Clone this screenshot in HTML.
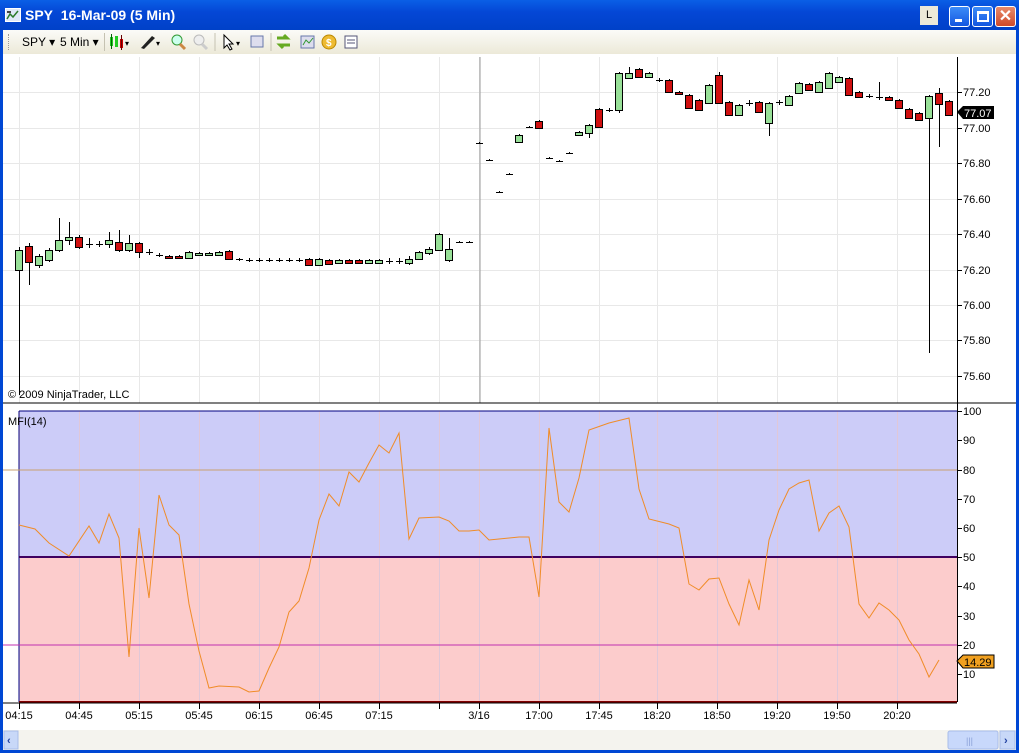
<!DOCTYPE html>
<html><head><meta charset="utf-8"><style>
*{margin:0;padding:0;box-sizing:border-box}
body{width:1019px;height:753px;overflow:hidden;background:#fff;font-family:"Liberation Sans",sans-serif;position:relative}
#title{position:absolute;left:0;top:0;width:1019px;height:30px;background:linear-gradient(#0a5fe6,#0447d6 40%,#0041c8);color:#fff;font-weight:bold;font-size:14px}
#tb{position:absolute;left:0;top:30px;width:1019px;height:24px;background:linear-gradient(#fbfbf8,#ece9d8);border-left:3px solid #0047d4;border-right:3px solid #0047d4;font-size:12px}
#frame{position:absolute;left:0;top:54px;width:1019px;height:699px;border-left:3px solid #0047d4;border-right:3px solid #0047d4;border-bottom:3px solid #0047d4}
.btn{position:absolute;top:6px;width:21px;height:21px;border:1px solid #fff;border-radius:3px;background:linear-gradient(#3c8cf8,#1356e0)}
</style></head><body>
<div id="title">
 <svg style="position:absolute;left:5px;top:8px" width="16" height="14"><rect x="0.5" y="0.5" width="15" height="13" fill="#dfe8f8" stroke="#fff"/><polyline points="2,11 5,6 8,9 13,3" fill="none" stroke="#2a7a2a" stroke-width="1.5"/><rect x="2" y="3" width="4" height="2" fill="#444"/></svg>
 <span style="position:absolute;left:25px;top:7px">SPY&nbsp; 16-Mar-09 (5 Min)</span>
 <div style="position:absolute;left:920px;top:6px;width:18px;height:19px;background:#ece9d8;color:#000;font-weight:normal;font-size:11px;text-align:center;line-height:19px">L</div>
 <div class="btn" style="left:949px"><div style="position:absolute;left:5px;top:12px;width:7px;height:3px;background:#fff"></div></div>
 <div class="btn" style="left:972px"><div style="position:absolute;left:4px;top:4px;width:12px;height:11px;border:2px solid #fff;border-top-width:3px"></div></div>
 <div class="btn" style="left:995px;background:linear-gradient(#e88a6a,#cf4a2a);color:#fff;text-align:center;line-height:19px;font-size:16px">✕</div>
</div>
<div id="tb">
 <div style="position:absolute;left:5px;top:4px;width:2px;height:16px;border-left:1px dotted #999"></div>
 <span style="position:absolute;left:19px;top:5px">SPY ▾</span>
 <span style="position:absolute;left:57px;top:5px">5 Min ▾</span>
 <div style="position:absolute;left:101px;top:3px;width:1px;height:18px;background:#c5c2b2"></div>
 <svg style="position:absolute;left:105px;top:3px" width="250" height="18">
  <rect x="2" y="4" width="3" height="9" fill="#2c2"/><line x1="3.5" y1="1" x2="3.5" y2="16" stroke="#060"/>
  <rect x="7" y="3" width="3" height="11" fill="#2c2"/><rect x="12" y="6" width="3" height="9" fill="#c00"/><line x1="13.5" y1="2" x2="13.5" y2="17" stroke="#600"/>
  <text x="17" y="13" font-size="8">▾</text>
  <path d="M33 15 L44 3 L47 5 L36 16 Z" fill="#222"/><text x="48" y="13" font-size="8">▾</text>
  <circle cx="69" cy="7" r="5" fill="#cfe" stroke="#393"/><line x1="72" y1="11" x2="77" y2="16" stroke="#c84" stroke-width="3"/>
  <circle cx="91" cy="7" r="5" fill="#eee" stroke="#bbb"/><line x1="94" y1="11" x2="99" y2="16" stroke="#ccc" stroke-width="3"/>
  <line x1="107" y1="0" x2="107" y2="18" stroke="#c5c2b2"/>
  <path d="M116 2 L116 15 L119 12 L122 17 L124 16 L121 11 L125 11 Z" fill="#fff" stroke="#000"/><text x="128" y="13" font-size="8">▾</text>
  <rect x="143" y="3" width="12" height="11" fill="#dde" stroke="#67a"/>
  <line x1="163" y1="0" x2="163" y2="18" stroke="#c5c2b2"/>
  <path d="M169 5 h10 l-3 -3 M182 12 h-10 l3 3" stroke="#6a2" stroke-width="3" fill="none"/>
  <rect x="193" y="3" width="13" height="12" fill="#dde" stroke="#67a"/><polyline points="195,12 198,7 201,10 205,5" stroke="#393" fill="none"/>
  <circle cx="221" cy="9" r="7" fill="#eb3" stroke="#b80"/><text x="218" y="13" font-size="10" fill="#fff" font-weight="bold">$</text>
  <rect x="237" y="3" width="12" height="12" fill="#fff" stroke="#557"/><line x1="239" y1="7" x2="247" y2="7" stroke="#557"/><line x1="239" y1="10" x2="247" y2="10" stroke="#557"/>
 </svg>
</div>
<div id="frame"></div>
<svg id="c" style="position:absolute;left:0;top:54px" width="1019" height="699" viewBox="0 54 1019 699" font-family="Liberation Sans" font-size="11">
 <g id="grid" stroke="#e8e8e8"></g>
 <line x1="480" y1="57" x2="480" y2="403" stroke="#999"/>
 <rect x="19" y="411" width="938" height="146" fill="#ccccf8"/>
 <rect x="19" y="557" width="938" height="145" fill="#fccccc"/>
 <g id="grid2" stroke="#e0c8d8"></g>
 <line x1="19" y1="411" x2="19" y2="702" stroke="#000080"/>
 <line x1="19" y1="411" x2="957" y2="411" stroke="#000080"/>
 <line x1="3" y1="470" x2="957" y2="470" stroke="#c8a070"/>
 <line x1="3" y1="645" x2="957" y2="645" stroke="#c030b0"/>
 <line x1="19" y1="557" x2="957" y2="557" stroke="#400060" stroke-width="2"/>
 <line x1="19" y1="702" x2="957" y2="702" stroke="#800000" stroke-width="2"/>
 <line x1="3" y1="403" x2="1016" y2="403" stroke="#000"/>
 <line x1="957.5" y1="57" x2="957.5" y2="702" stroke="#000"/>
 <line x1="3" y1="703" x2="957" y2="703" stroke="#000"/>
 <g id="cand"></g>
 <polyline id="mfi" fill="none" stroke="#f08c28" stroke-width="1"/>
 <g id="ax" fill="#000"></g>
 <text x="8" y="398">© 2009 NinjaTrader, LLC</text>
 <text x="8" y="425">MFI(14)</text>
 <path d="M957 112 l6 -6 h31 v13 h-31 z" fill="#000"/><text x="964" y="117" fill="#fff">77.07</text>
 <path d="M957 661 l6 -6 h31 v13 h-31 z" fill="#f0a020" stroke="#000"/><text x="964" y="666" fill="#000">14.29</text>
 <rect x="3" y="730" width="1013" height="20" fill="#f4f3ee"/>
 <rect x="4" y="731" width="14" height="18" fill="#c8d8f8" stroke="#a8bce8"/><text x="7" y="744" fill="#2040a0" font-weight="bold">‹</text>
 <rect x="948" y="731" width="50" height="18" rx="2" fill="#c8d8fb" stroke="#a8bce8"/><text x="966" y="744" fill="#8aa0d8" font-size="9">|||</text>
 <rect x="1000" y="731" width="15" height="18" fill="#c8d8f8" stroke="#a8bce8"/><text x="1004" y="744" fill="#2040a0" font-weight="bold">›</text>
</svg>
<script>
const ns="http://www.w3.org/2000/svg";
function el(p,t,a){const e=document.createElementNS(ns,t);for(const k in a)e.setAttribute(k,a[k]);p.appendChild(e);return e}
const g=document.getElementById('grid'),g2=document.getElementById('grid2');
const vx=[19,79,139,199,259,319,379,439,479,539,599,657,717,777,837,897];
vx.forEach(x=>{el(g,'line',{x1:x+.5,y1:57,x2:x+.5,y2:403});el(g2,'line',{x1:x+.5,y1:411,x2:x+.5,y2:702})});
[92,128,163,199,234,270,305,340,376].forEach(y=>el(g,'line',{x1:3,y1:y+.5,x2:957,y2:y+.5}));
const C=[[19,250,270,247,395,'g'],[29,246,262,243,285,'r'],[39,256,265,254,268,'g'],[49,250,260,248,262,'g'],[59,240,250,218,252,'g'],[69,237,240,222,245,'g'],[79,237,247,235,249,'r'],[89,244,244,238,248],[99,244,244,241,247],[109,240,244,232,248,'g'],[119,242,250,230,252,'r'],[129,243,250,235,252,'g'],[139,243,252,242,258,'r'],[149,252,252,249,255],[159,255,255,253,257],[169,256,258,255,259,'r'],[179,256,258,255,259,'r'],[189,252,258,251,259,'g'],[199,253,255,252,256,'g'],[209,253,255,252,256,'g'],[219,252,255,251,256,'g'],[229,251,259,250,260,'r'],[239,259,259,258,261],[249,260,260,258,262],[259,260,260,258,262],[269,260,260,258,262],[279,260,260,258,262],[289,260,260,258,262],[299,260,260,258,262],[309,259,265,258,266,'r'],[319,259,265,258,266,'g'],[329,260,264,259,265,'r'],[339,260,263,259,264,'g'],[349,260,263,259,264,'r'],[359,260,263,259,264,'r'],[369,260,263,259,264,'g'],[379,260,263,259,264,'g'],[389,261,261,258,264],[399,261,261,258,264],[409,259,263,256,265,'g'],[419,252,259,251,260,'g'],[429,249,253,247,255,'g'],[439,234,250,233,251,'g'],[449,249,260,238,262,'g'],[459,242,242,241,243],[469,242,242,241,243],[479,143,143,142,144],[489,160,160,159,161],[499,192,192,191,193],[509,174,174,173,175],[519,135,142,134,143,'g'],[529,127,127,126,128],[539,121,128,120,129,'r'],[549,158,158,157,159],[559,161,161,160,162],[569,153,153,152,154],[579,132,135,131,136,'g'],[589,125,133,124,138,'g'],[599,109,127,108,128,'r'],[609,110,110,108,112],[619,73,110,72,113,'g'],[629,73,78,67,79,'g'],[639,69,77,68,78,'r'],[649,73,77,72,78,'g'],[659,80,80,78,82],[669,80,92,79,93,'r'],[679,92,94,91,95,'r'],[689,95,108,94,109,'r'],[699,100,110,99,111,'r'],[709,85,103,84,104,'g'],[719,75,103,72,104,'r'],[729,102,115,101,116,'r'],[739,105,115,104,116,'g'],[749,103,103,100,106],[759,102,112,101,113,'r'],[769,103,123,102,136,'g'],[779,102,102,100,105],[789,96,105,95,106,'g'],[799,83,93,82,94,'g'],[809,84,90,83,91,'r'],[819,82,92,81,93,'g'],[829,73,88,72,89,'g'],[839,77,82,76,83,'g'],[849,78,95,77,96,'r'],[859,92,97,91,98,'r'],[869,96,96,94,98],[879,97,97,82,100],[889,97,100,96,101,'r'],[899,100,108,99,109,'r'],[909,109,118,108,119,'r'],[919,113,120,112,121,'r'],[929,96,118,95,353,'g'],[939,93,104,88,147,'r'],[949,101,115,100,116,'r']];
const cg=document.getElementById('cand');
C.forEach(c=>{const x=c[0]+.5;el(cg,'line',{x1:x,y1:c[3],x2:x,y2:c[4],stroke:'#000'});
 if(c[5]){el(cg,'rect',{x:c[0]-3.5,y:c[1]+.5,width:7,height:Math.max(c[2]-c[1],1),fill:c[5]=='g'?'#98e098':'#d01010',stroke:'#000'})}
 else el(cg,'line',{x1:c[0]-3,y1:c[1]+.5,x2:c[0]+4,y2:c[1]+.5,stroke:'#000'});});
document.getElementById('mfi').setAttribute('points',"19,525 35,529 49,543 69,556 89,526 99,543 109,514 119,538 129,657 139,528 149,598 159,495 169,525 179,535 189,604 199,651 209,688 219,686 239,687 249,692 259,691 269,668 279,647 289,612 299,601 309,568 319,520 329,494 339,506 349,472 359,482 369,463 379,445 389,453 399,433 409,539 419,518 439,517 449,521 459,531 469,531 479,530 489,540 499,539 519,537 529,537 539,597 549,428 559,502 569,512 579,478 589,430 609,423 629,418 639,489 649,519 669,524 679,528 689,584 699,590 709,579 719,578 729,604 739,625 749,580 759,610 769,540 779,510 789,489 799,483 809,480 819,531 829,513 839,506 849,527 859,604 869,618 879,603 889,610 899,620 909,640 919,654 929,677 939,660");
const ax=document.getElementById('ax');
[[92,'77.20'],[128,'77.00'],[163,'76.80'],[199,'76.60'],[234,'76.40'],[270,'76.20'],[305,'76.00'],[340,'75.80'],[376,'75.60']].forEach(a=>{el(ax,'line',{x1:957,y1:a[0]+.5,x2:962,y2:a[0]+.5,stroke:'#000'});if(a[1]!='77.00'||true){const t=el(ax,'text',{x:963,y:a[0]+4});t.textContent=a[1]}});
[[411,'100'],[440,'90'],[470,'80'],[499,'70'],[528,'60'],[557,'50'],[586,'40'],[616,'30'],[645,'20'],[674,'10']].forEach(a=>{el(ax,'line',{x1:957,y1:a[0]+.5,x2:962,y2:a[0]+.5,stroke:'#000'});const t=el(ax,'text',{x:963,y:a[0]+4});t.textContent=a[1]});
[[19,'04:15'],[79,'04:45'],[139,'05:15'],[199,'05:45'],[259,'06:15'],[319,'06:45'],[379,'07:15'],[439,''],[479,'3/16'],[539,'17:00'],[599,'17:45'],[657,'18:20'],[717,'18:50'],[777,'19:20'],[837,'19:50'],[897,'20:20']].forEach(a=>{el(ax,'line',{x1:a[0]+.5,y1:703,x2:a[0]+.5,y2:709,stroke:'#000'});const t=el(ax,'text',{x:a[0],y:719,'text-anchor':'middle'});t.textContent=a[1]});
</script>
</body></html>
